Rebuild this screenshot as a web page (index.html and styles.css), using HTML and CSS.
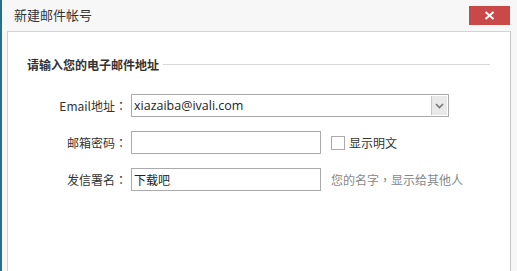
FILE: index.html
```html
<!DOCTYPE html>
<html>
<head>
  <meta charset="UTF-8">
  <title>新建邮件帐号</title>
  <link rel="stylesheet" href="styles.css">
</head>
<body>
  <div class="window">
    <div class="title-bar">
      <span class="title">新建邮件帐号</span>
      <span class="close-btn">
        <svg width="11" height="9" viewBox="0 0 11 9"><path d="M1.5 1 L9.5 8 M9.5 1 L1.5 8" stroke="#fff" stroke-width="2"/></svg>
      </span>
    </div>
    <div class="panel">
      <div class="section-title">
        <span>请输入您的电子邮件地址</span>
        <div class="section-line"></div>
      </div>
      <div class="form-row">
        <label class="form-label">Email地址<span class="punct">：</span></label>
        <div class="select-box">
          <span class="field-text latin">xiazaiba@ivali.com</span>
          <span class="select-arrow">
            <svg width="9" height="6" viewBox="0 0 9 6"><path d="M1 1 L4.5 4.5 L8 1" stroke="#777" stroke-width="1.6" fill="none"/></svg>
          </span>
        </div>
      </div>
      <div class="form-row">
        <label class="form-label">邮箱密码<span class="punct">：</span></label>
        <div class="text-box"></div>
        <span class="checkbox"></span>
        <span class="check-label">显示明文</span>
      </div>
      <div class="form-row">
        <label class="form-label">发信署名<span class="punct">：</span></label>
        <div class="text-box"><span class="field-text">下载吧</span></div>
        <span class="hint">您的名字<span class="punct">，</span>显示给其他人</span>
      </div>
    </div>
  </div>
</body>
</html>
```

FILE: styles.css
```css
body {
  margin: 0;
  font-family: "Noto Sans CJK SC", "Noto Sans", sans-serif;
  font-size: 12px;
  color: #333;
}
.window {
  width: 515px;
  height: 271px;
  background-color: #f7f7f7;
  border-left: 2px solid #2b6d8c;
  display: flex;
  flex-direction: column;
  overflow: hidden;
}
.title-bar {
  height: 31px;
  display: flex;
  align-items: flex-start;
  justify-content: space-between;
  padding-left: 12px;
  padding-right: 7px;
}
.title {
  font-size: 13px;
  line-height: 30px;
  color: #333;
}
.close-btn {
  margin-top: 6px;
  width: 41px;
  height: 19px;
  background-color: #c94848;
  display: flex;
  align-items: center;
  justify-content: center;
}
.panel {
  flex: 1;
  margin-left: 5px;
  margin-right: 6px;
  background-color: #fff;
  border-left: 1px solid #b9dde5;
  border-top: 1px solid #cfd4d7;
  border-right: 1px solid #c6c6c6;
  padding-top: 23px;
}
.section-title {
  display: flex;
  align-items: center;
  padding-left: 19px;
  padding-right: 20px;
  height: 18px;
  font-weight: bold;
  margin-bottom: 21px;
}
.section-line {
  flex: 1;
  height: 1px;
  background-color: #d8d8d8;
  margin-left: 4px;
}
.form-row {
  display: flex;
  align-items: center;
  height: 23px;
  margin-bottom: 14px;
}
.form-label {
  width: 119px;
  text-align: right;
  margin-right: 4px;
}
.punct {
  font-family: "Noto Sans CJK TC", sans-serif;
}
.select-box {
  width: 316px;
  height: 21px;
  border: 1px solid #aaa;
  display: flex;
  align-items: center;
  justify-content: space-between;
}
.text-box {
  width: 188px;
  height: 21px;
  border: 1px solid #aaa;
  display: flex;
  align-items: center;
}
.field-text {
  padding-left: 2px;
  font-size: 12px;
  color: #222;
}
.field-text.latin {
  font-family: "Open Sans", "Noto Sans", sans-serif;
  font-size: 12.5px;
}
.select-arrow {
  width: 15px;
  height: 19px;
  margin-right: 1px;
  background-color: #e9e9e9;
  border-left: 1px solid #c8c8c8;
  display: flex;
  align-items: center;
  justify-content: center;
}
.checkbox {
  width: 12px;
  height: 12px;
  border: 1px solid #aaa;
  margin-left: 10px;
  margin-right: 4px;
}
.check-label {
  color: #333;
}
.hint {
  margin-left: 10px;
  color: #888;
}
```
